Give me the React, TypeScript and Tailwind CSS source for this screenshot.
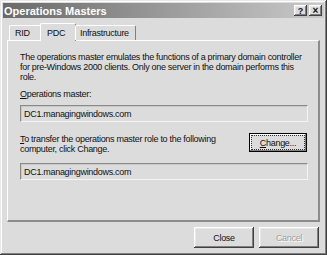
import React from "react";

const raised =
  "shadow-[inset_-1px_-1px_#404040,inset_1px_1px_#ffffff,inset_-2px_-2px_#808080,inset_2px_2px_#e8e8e8]";

function Field({ value }: { value: string }) {
  return (
    <div className="h-[17px] flex items-center pl-[3px] border-t border-l border-[#8a8a8a] border-r border-b border-r-[#f4f4f4] border-b-[#f4f4f4] shadow-[inset_1px_1px_#c8c8c8]">
      {value}
    </div>
  );
}

export default function App() {
  return (
    <div
      className="w-[327px] h-[255px] bg-[#dcdcdc] text-[9px] leading-[10px] text-[#111] flex flex-col p-[3px] shadow-[inset_-1px_-1px_#404040,inset_1px_1px_#e8e8e8,inset_-2px_-2px_#808080,inset_2px_2px_#ffffff] overflow-hidden"
      style={{ fontFamily: '"Liberation Sans", Arial, sans-serif' }}
    >
      {/* Title bar */}
      <div className="h-[15px] flex items-center justify-between pl-[1px] pr-[2px] bg-gradient-to-r from-[#6a6a6a] via-[#9a9a9a] to-[#cacaca]">
        <span className="text-white font-bold text-[11px]">Operations Masters</span>
        <div className="flex gap-[2px]">
          <div className={`w-[13px] h-[11px] bg-[#dcdcdc] flex items-center justify-center text-[9px] font-bold ${raised}`}>?</div>
          <div className={`w-[13px] h-[11px] bg-[#dcdcdc] flex items-center justify-center text-[10px] font-bold ${raised}`}>×</div>
        </div>
      </div>

      <div className="flex-1 flex flex-col px-[4px] pt-[5px] tracking-[-0.3px]">
        {/* Tabs */}
        <div className="flex items-end h-[17px] pl-[2px] relative z-10">
          <div className="h-[15px] w-[32px] flex items-center pl-[5px] border-t border-l border-white border-r border-r-[#808080] rounded-t-[2px]">RID</div>
          <div className="h-[18px] w-[36px] mb-[-1px] flex items-center pl-[6px] bg-[#dcdcdc] border-t border-l border-white border-r border-r-[#808080] rounded-t-[2px] -ml-[1px]">PDC</div>
          <div className="h-[15px] w-[61px] flex items-center pl-[4px] border-t border-l border-white border-r border-r-[#808080] rounded-t-[2px] -ml-[1px]">Infrastructure</div>
        </div>

        {/* Panel */}
        <div className="h-[182px] flex flex-col pl-[12px] pr-[8px] pt-[11px] border-t border-l border-white border-r-2 border-b-2 border-r-[#8c8c8c] border-b-[#8c8c8c]">
          <p className="leading-[10px]">
            The operations master emulates the functions of a primary domain controller for pre-Windows 2000 clients. Only one server in the domain performs this role.
          </p>
          <div className="mt-[7px] first-letter:underline">Operations master:</div>
          <div className="mt-[6px] mr-[2px]">
            <Field value="DC1.managingwindows.com" />
          </div>
          <div className="mt-[11px] flex items-start justify-between">
            <p className="leading-[10px] w-[210px] pt-[1px] first-letter:underline">
              To transfer the operations master role to the following computer, click Change.
            </p>
            <div className="w-[58px] h-[19px] mr-[3px] border border-black bg-[#dcdcdc] p-[1px] shadow-[inset_-1px_-1px_#808080,inset_1px_1px_#ffffff]">
              <div className="w-full h-full border border-dotted border-[#333] flex items-center justify-center">
                <span className="inline-block first-letter:underline">Change...</span>
              </div>
            </div>
          </div>
          <div className="mt-[9px] mr-[2px]">
            <Field value="DC1.managingwindows.com" />
          </div>
        </div>

        {/* Bottom buttons */}
        <div className="flex justify-end gap-[5px] mt-[5px] pr-[1px]">
          <div className={`w-[60px] h-[21px] flex items-center justify-center bg-[#dcdcdc] ${raised}`}>Close</div>
          <div className={`w-[60px] h-[21px] flex items-center justify-center bg-[#dcdcdc] text-[#a0a0a0] [text-shadow:1px_1px_#ffffff] ${raised}`}>Cancel</div>
        </div>
      </div>
    </div>
  );
}
